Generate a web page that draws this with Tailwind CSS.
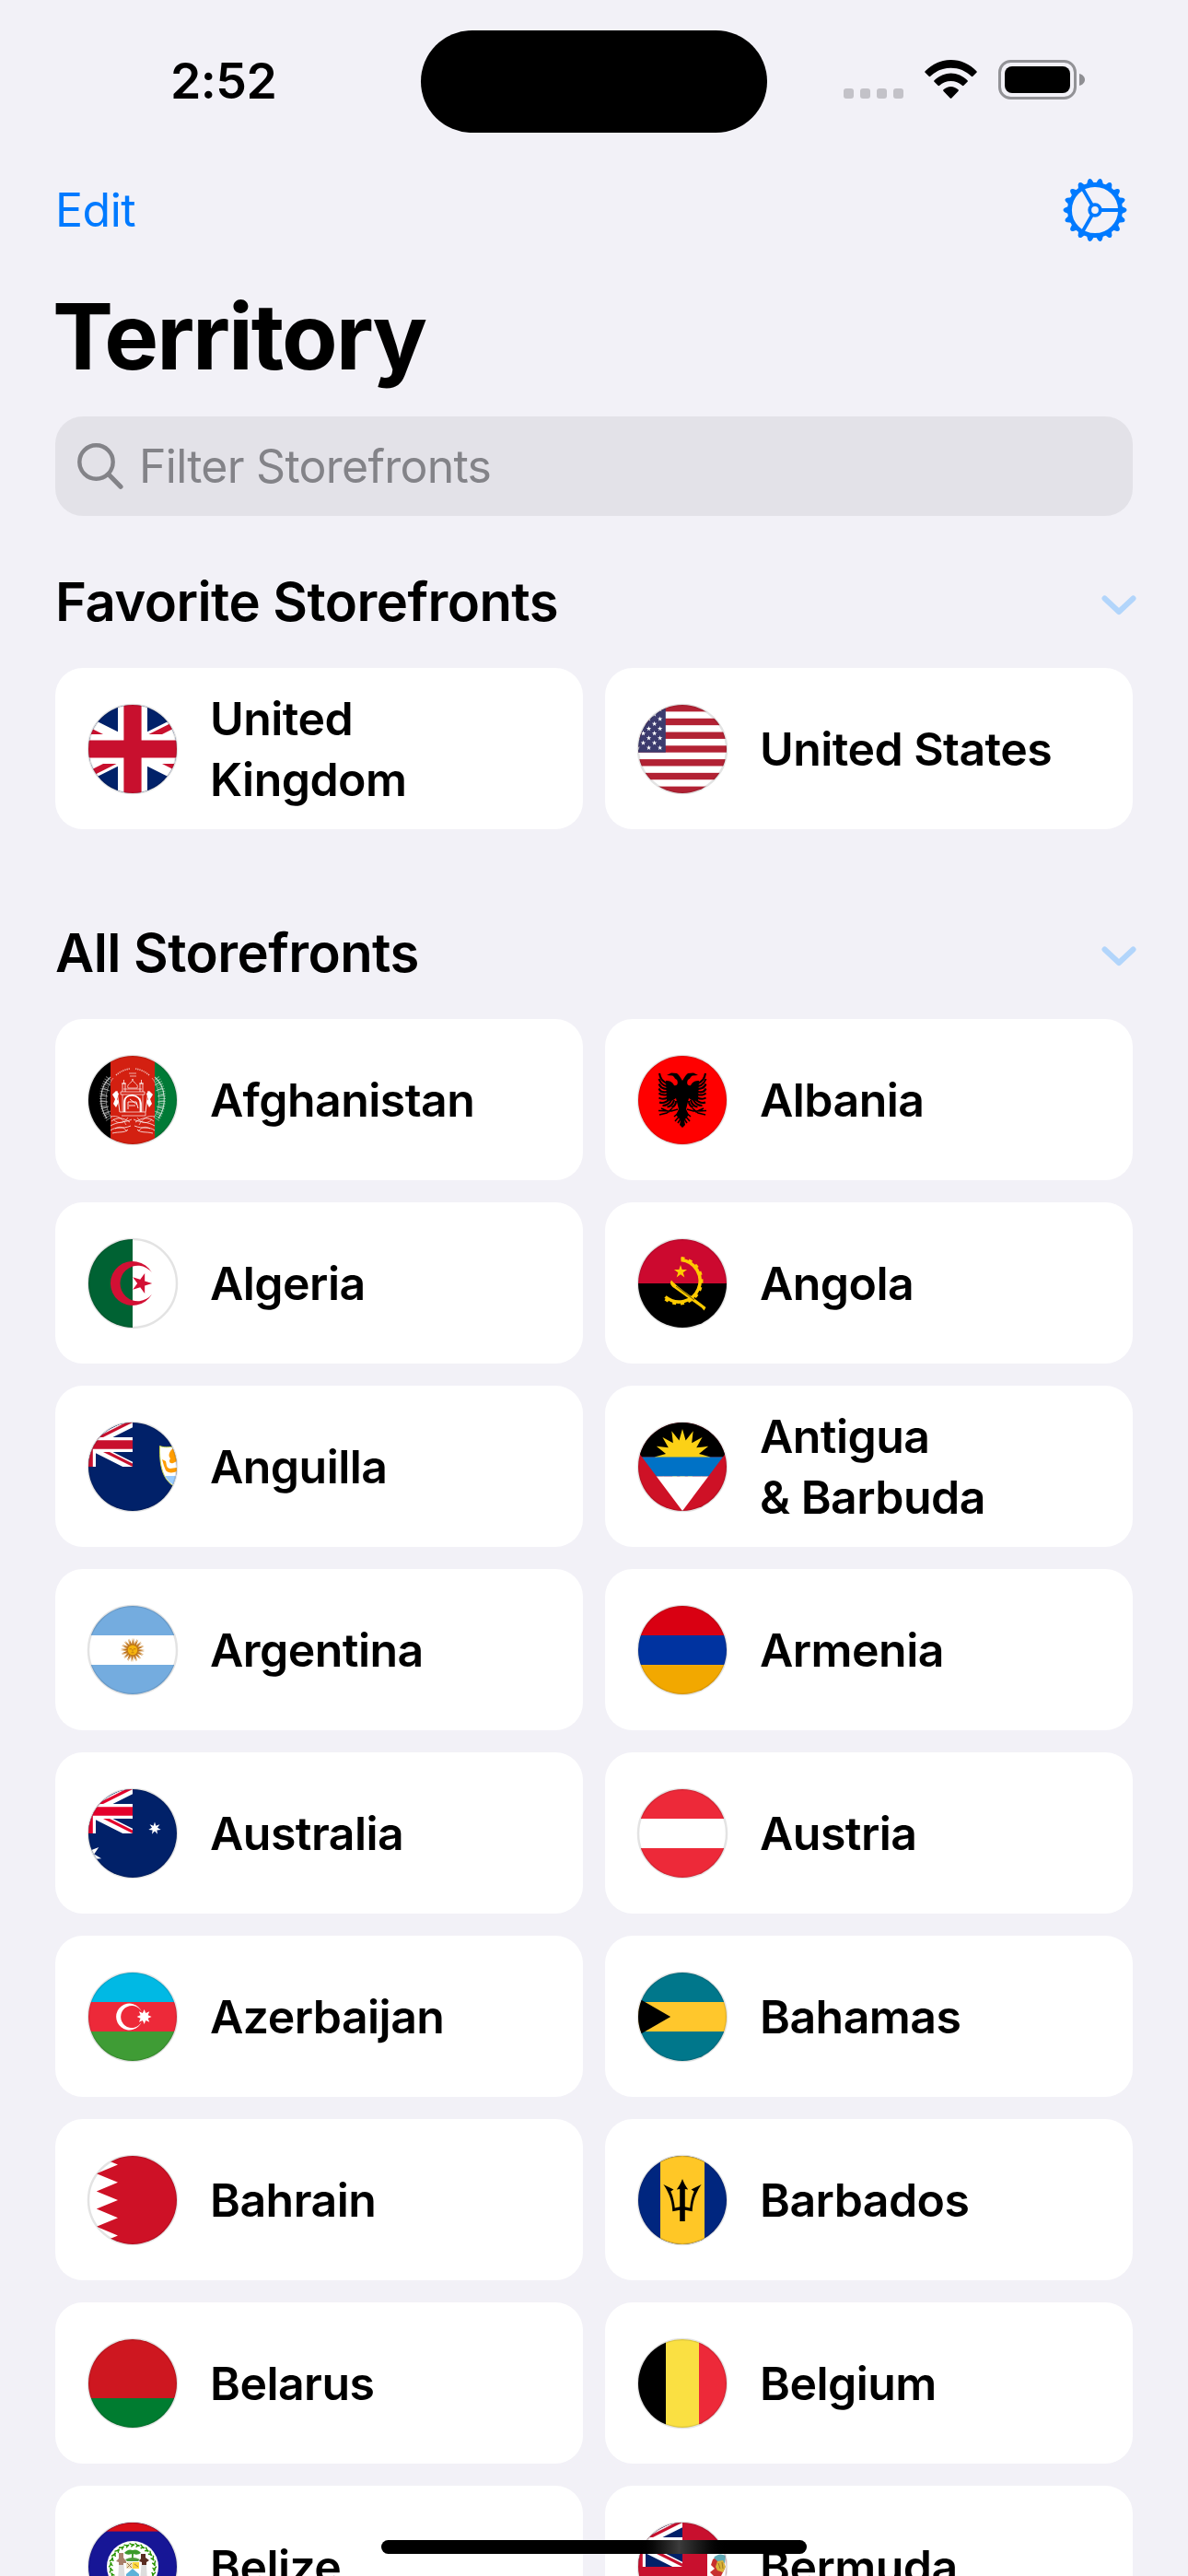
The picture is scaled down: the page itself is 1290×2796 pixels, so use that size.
<!DOCTYPE html>
<html lang="en">
<head>
<meta charset="utf-8">
<meta name="viewport" content="width=device-width, initial-scale=1">
<title>Territory</title>
<script src="https://cdn.jsdelivr.net/npm/@tailwindcss/browser@4"></script>
</head>
<body class="bg-[#f2f1f7] font-['Inter',sans-serif] text-black">
<main class="relative h-[2796px] w-[1290px] overflow-hidden">

  <!-- Status bar -->
  <div class="flex h-36 items-end">
    <div class="flex h-[111px] w-[457px] shrink-0 items-center pl-[185px] text-[53.500px] font-semibold tracking-[-0.01em]"><span>2:52</span></div>
    <div class="h-[111px] w-[376px] shrink-0 rounded-full bg-black"></div>
    <div class="flex h-[111px] w-[457px] shrink-0 items-start pt-8 pl-[83px]">
      <div class="mt-[31px] flex gap-[7px]">
        <i class="size-[11px] rounded-[3px] bg-[#c3c2c8]"></i><i class="size-[11px] rounded-[3px] bg-[#c3c2c8]"></i><i class="size-[11px] rounded-[3px] bg-[#c3c2c8]"></i><i class="size-[11px] rounded-[3px] bg-[#c3c2c8]"></i>
      </div>
      <svg class="ml-[23px] h-[42px] w-[57px]" viewBox="0 0 57 42">
        <path d="M.6 12.2C8 4.400 18 0 28.500 0S49 4.400 56.400 12.200Q57.200 13 56.400 13.800L52.400 17.800Q51.500 18.500 50.700 17.700C45 12 37 8.700 28.500 8.700S12 12 6.300 17.700Q5.500 18.500 4.600 17.800L.6 13.800Q-.2 13 .6 12.200Z"/>
        <path d="M10.500 22.200C15.500 17.400 21.800 14.500 28.500 14.500S41.500 17.400 46.500 22.200Q47.300 23 46.500 23.800L42.500 27.800Q41.600 28.500 40.800 27.800C37.500 24.800 33.200 23 28.500 23S19.500 24.800 16.200 27.800Q15.400 28.500 14.500 27.800L10.500 23.800Q9.700 23 10.500 22.200Z"/>
        <path d="M20.500 32.300C22.800 30.300 25.500 29 28.500 29S34.200 30.300 36.500 32.300Q37.400 33.100 36.500 34L29.300 41.400Q28.500 42 27.700 41.400L20.500 34Q19.600 33.100 20.500 32.300Z"/>
      </svg>
      <svg class="ml-[23px] h-[43px] w-[94px]" viewBox="0 0 94 43">
        <rect x="1.500" y="1.500" width="82" height="40" rx="12" fill="none" stroke="#929296" stroke-width="3"/>
        <rect x="7" y="7" width="71" height="29" rx="8"/>
        <path d="M88 15C92 16 94 19 94 21.500S92 27 88 28Z" fill="#8f8f93"/>
      </svg>
    </div>
  </div>

  <!-- Navigation -->
  <nav class="mt-9 flex h-24 items-center justify-between pr-[66px] pl-[60px] text-[50px] tracking-[-0.01em] text-[#007aff]">
    <a>Edit</a>
    <svg id="gear" class="size-[70px]" viewBox="-35 -35 70 70" fill="none" stroke="#007aff">
      <circle r="27.500" stroke-width="4.800"/>
      <circle r="5.800" stroke-width="3.800"/>
      <path d="M7 0H27M-3.500 6.060L-13.500 23.400M-3.500-6.060L-13.500-23.400" stroke-width="3.800"/>
    </svg>
  </nav>

  <div class="px-[60px]">
    <h1 class="mt-[29px] -ml-[3px] h-[120px] text-[99px] leading-[120px] font-bold tracking-[-0.021em]">Territory</h1>

    <div class="mt-[27px] flex h-[108px] items-center rounded-[30px] bg-[#e3e2e8] pl-6 text-[50px] tracking-[-0.015em] text-[#838388]">
      <svg class="mr-[17px] size-[50px]" viewBox="0 0 50 50" fill="none" stroke="#838388" stroke-width="4.400" stroke-linecap="round"><circle cx="20.500" cy="20.500" r="18.200"/><path d="M34 34L47 47.200" stroke-width="5.200"/></svg>
      <span>Filter Storefronts</span>
    </div>

    <section>
      <header class="mt-[57px] mb-9 flex h-[72px] items-center justify-between">
        <h2 class="text-[58px] font-semibold tracking-[-0.0095em]">Favorite Storefronts</h2>
        <svg class="mt-[7px] -mr-1 h-[22px] w-[38px]" viewBox="0 0 38 22" fill="none" stroke="#b2d5fb" stroke-width="6" stroke-linecap="round" stroke-linejoin="round"><path d="M3.500 3.500L19 18L34.500 3.500"/></svg>
      </header>
      <div id="favorites" class="grid grid-cols-2 gap-6"></div>
    </section>

    <section>
      <header class="mt-[98px] mb-9 flex h-[72px] items-center justify-between">
        <h2 class="text-[58px] font-semibold tracking-[-0.0095em]">All Storefronts</h2>
        <svg class="mt-[7px] -mr-1 h-[22px] w-[38px]" viewBox="0 0 38 22" fill="none" stroke="#b2d5fb" stroke-width="6" stroke-linecap="round" stroke-linejoin="round"><path d="M3.500 3.500L19 18L34.500 3.500"/></svg>
      </header>
      <div id="all" class="grid grid-cols-2 gap-6"></div>
    </section>
  </div>

  <!-- Home indicator -->
  <div class="absolute top-[2757px] left-[414px] h-[15px] w-[462px] rounded-full bg-linear-to-r from-black from-60% via-[#3c3c3c] via-70% to-black to-82%"></div>
</main>

<!-- Shared flag parts -->
<svg class="absolute size-0">
  <defs>
    <clipPath id="disc"><circle cx="48" cy="48" r="48"/></clipPath>
    <clipPath id="saltire"><path d="M30 15h30v15zv15h-30zh-30v-15zv-15h30z"/></clipPath>
    <clipPath id="jackBox"><path d="M0 0h60v30h-60z"/></clipPath>
  </defs>
</svg>

<script>
const R = (x, y, w, h, c) => `<rect x="${x}" y="${y}" width="${w}" height="${h}" fill="${c}"/>`;
const P = (d, c, extra = '') => `<path d="${d}" fill="${c}" ${extra}/>`;
const L = (d, c, w, extra = '') => `<path d="${d}" fill="none" stroke="${c}" stroke-width="${w}" ${extra}/>`;
const star = (cx, cy, r, n, inner, c, rot = -90) => {
  let pts = [];
  for (let i = 0; i < n * 2; i++) {
    const a = (rot + i * 180 / n) * Math.PI / 180, q = i % 2 ? r * inner : r;
    pts.push((cx + q * Math.cos(a)).toFixed(2) + ',' + (cy + q * Math.sin(a)).toFixed(2));
  }
  return `<polygon points="${pts.join(' ')}" fill="${c}"/>`;
};
const bands = (a, b, c) => R(0, 0, 96, 32, a) + R(0, 32, 96, 32, b) + R(0, 64, 96, 32, c);
const jack = (transform, red) => `<g transform="${transform}"><g clip-path="url(#jackBox)">${R(0, 0, 60, 30, '#012169')}
  ${L('M0 0L60 30M60 0L0 30', '#fff', 6)}${L('M0 0L60 30M60 0L0 30', red, 4, 'clip-path="url(#saltire)"')}
  ${L('M30 0V30M0 15H60', '#fff', 10)}${L('M30 0V30M0 15H60', red, 6)}</g></g>`;
const mirror = s => s + `<g transform="matrix(-1 0 0 1 96 0)">${s}</g>`;

const flags = {
  gb: () => jack('translate(-48 0) scale(3.2)', '#C8102E'),
  us: () => {
    let s = R(0, 0, 96, 96, '#fff');
    for (let i = 0; i < 13; i += 2) s += R(0, i * 96 / 13, 96, 96 / 13, '#B22234');
    s += R(0, 0, 29.8, 51.7, '#3C3B6E');
    for (let i = 6; i < 12; i++) for (let j = 1; j < 10; j++) if ((i + j) % 2 == 0) s += star(-43.2 + 6.08 * i, 5.17 * j, 2.9, 5, .382, '#fff');
    return s;
  },
  af: () => {
    let s = R(0, 0, 24, 96, '#000') + R(24, 0, 48, 96, '#D32011') + R(72, 0, 24, 96, '#007A36');
    let half = L('M24 23C11 34 11 55 20 68', '#fff', 1.1, 'opacity=".7"') + L('M27 24C17 36 17 56 25 67', '#fff', .8, 'opacity=".6"')
      + L('M22 24C13 36 13 55 22 69', '#fff', 6.5, 'stroke-dasharray="1 1.6" opacity=".45"')
      + L('M19 29L24 32M16 35L23 38M14 42L21 44M14 49L21 50M15 56L22 55M18 63L24 60', '#fff', .8, 'opacity=".7"')
      + L('M25 71C31 66 38 67 45 72M24 76C32 71 39 73 47 69M24 81C30 76 37 80 46 76M26 84C34 82 39 84 43 80', '#fff', .9, 'opacity=".85"')
      + L('M27 69C33 75 39 73 43 67M29 79C34 76 38 77 42 82M24 66C32 64 37 68 41 75', '#fff', .7, 'opacity=".85"')
      + P('M26 42L30 38L33 41L31 47L33 50L30 56L27 52L29 47Z', '#fff') + L('M31 38L34 61', '#fff', .9)
      + L('M37 39V30H40V39M36 30H41M38.5 30V26', '#fff', .9, 'opacity=".85"') + L('M30 21Q37 15 45 14', '#fff', 1.6, 'stroke-dasharray="1.2 1" opacity=".7"');
    s += mirror(half);
    s += L('M43 35C41 30 48 30 48 25C48 30 55 30 53 35ZM38 36H58M35 39H61V42H35ZM37 42V61M59 42V61M34 61H62V65H36M40 61V46M56 61V46', '#fff', .8, 'opacity=".85"')
      + L('M39 61V50C39 40 57 40 57 53V61', '#fff', 1.700) + L('M43 58V50H52L54 57M44 54H51M45 47L53 53', '#fff', .9) + L('M44 19H52M45 22H52', '#fff', .8, 'opacity=".8"');
    return s;
  },
  al: () => R(0, 0, 96, 96, '#FF0000') + mirror(
      P('M48 27C46 24 45 21 42 19L36 18.500L31 21L37 21.500C40 23 39 25 42 26C44 30 42 33 39 32C37 28 34 27 30 27L31 48C36 49 37 49 41 46L44 58L41 64L46 70L45 75L48 78Z', '#000')
      + L('M31 30C26 27 24 25 23 19M31 33C26 32 24 29 22.500 25M31 36C27 36 24 34 22.500 30.500M31 39C27 40 24 39 22.500 35.500M32 42C28 43 25 43 22.500 40.500M33 45C29 47 26 48 22.500 45.500M34 47C31 50 27 52 23 50.500M36 48C34 52 30 54 26.500 54M39 48C38 52 35 55 31.500 55.500M41 49C41 53 39 55 36.500 56', '#000', 2.100)
      + L('M43 58L36 60L22 59.500M37 57L31 62L23 64M34 61L25 57M45 61L39 66M46 64L40 71M47 67L43 73', '#000', 1.600)),
  dz: () => R(0, 0, 48, 96, '#006233') + R(48, 0, 48, 96, '#fff') + P('M68.900 36.300A24 24 0 1 0 68.900 59.700A19.200 19.200 0 1 1 68.900 36.300Z', '#D21034') + star(57.600, 48, 11.600, 5, .382, '#D21034', 0),
  ao: () => {
    let s = R(0, 0, 96, 48, '#CC092F') + R(0, 48, 96, 48, '#000');
    s += L('M46.500 22.500A22.800 22.800 0 1 1 29.500 62.500', '#FFCB00', 3.600);
    s += L('M46.500 20.500A24.800 24.800 0 1 1 28 64', '#FFCB00', 3, 'stroke-dasharray="4 4.7"');
    s += star(46, 35.400, 7.400, 5, .382, '#FFCB00');
    return s + P('M36 44.500C33.500 48 36 51 39 53L69 74.500L71.500 77.500L73.500 74L59 63C50 57 41 50 36 44.500Z', '#FFCB00') + L('M41 51L61 66', '#000', .6);
  },
  ai: () => R(0, 0, 96, 96, '#012169') + jack('translate(-48 0) scale(1.6)', '#C8102E')
      + P('M77.500 25.500C84 28 90 26 96 26H115V45C113 60 106 66 96 71C82 64 77 51 77.500 25.500Z', '#fff', 'stroke="#C8D44A" stroke-width="1"')
      + P('M83 58H110C106 63 102 67 96 70C90 67 86 63 83 58Z', '#9CF')
      + P('M92 28C88 31 86 36 89 39C87 42 88 45 92 44L96 42V31ZM80 40L84 42L85 47C87 52 91 49 96 49V53C92 55 86 55 84 52L82 47Z', '#FF9D00'),
  ag: () => `${R(0, 0, 96, 96, '#CE1126')}<clipPath id="vee"><path d="M-24 0H120L48 96Z"/></clipPath><g clip-path="url(#vee)">${R(0, 0, 96, 37.500, '#000')}${star(48, 37.500, 30.500, 16, .6, '#FCD116')}${R(0, 37.500, 96, 21, '#0072C6')}${R(0, 58.500, 96, 38, '#fff')}</g>`,
  ar: () => bands('#74ACDF', '#fff', '#74ACDF') + star(48, 48, 13.300, 16, .5, '#D9A35A') + star(48, 48, 13, 16, .4, '#B86E1F', -84)
      + `<circle cx="48" cy="48" r="5.800" fill="#F6B40E" stroke="#C07A15" stroke-width="1.200"/>` + L('M44.500 46.800H47M49 46.800H51.500M46.500 50.800H49.500M48 47V49.500', '#A85F10', .7),
  am: () => bands('#D90012', '#0033A0', '#F2A800'),
  au: () => R(0, 0, 96, 96, '#012169') + jack('translate(-48 0) scale(1.6)', '#E4002B') + star(0, 72, 14.400, 7, .444, '#fff') + star(72, 42.500, 6.900, 7, .444, '#fff'),
  at: () => bands('#ED2939', '#fff', '#ED2939'),
  az: () => bands('#00B9E4', '#ED2939', '#3F9C35') + P('M58 42.900A14.400 14.400 0 1 0 58 53.100A12 12 0 1 1 58 42.900Z', '#fff') + star(60.600, 48, 8, 8, .55, '#fff'),
  bs: () => bands('#00778B', '#FFC72C', '#00778B') + P('M-48 0L35.100 48L-48 96Z', '#000'),
  bh: () => R(0, 0, 96, 96, '#fff') + P('M96 0H8.800L32 9.600L8.800 19.200L32 28.800L8.800 38.400L32 48L8.800 57.600L32 67.200L8.800 76.800L32 86.400L8.800 96H96Z', '#CE1126'),
  bb: () => R(0, 0, 96, 96, '#00267F') + R(24, 0, 48, 96, '#FFC726')
      + mirror(P('M27.300 31L38.500 36.500L35.300 38.500C38 44 39 50 39.800 56.500L45.200 55.300V36L41.800 36.500C44.500 33 46.500 29 48 25V71H45.200V58.800L37.300 60.300C37 51 34.500 43.500 31.500 38C30.500 35.500 29 33.300 27.300 31Z', '#000')),
  by: () => R(0, 0, 96, 64, '#CE1720') + R(0, 64, 96, 32, '#007C30'),
  be: () => R(0, 0, 30, 96, '#000') + R(30, 0, 36, 96, '#FAE042') + R(66, 0, 30, 96, '#ED2939'),
  bz: () => {
    let s = R(0, 0, 96, 96, '#171696') + R(0, 0, 96, 9.600, '#D90F19') + R(0, 86.400, 96, 9.600, '#D90F19') + '<circle cx="48" cy="48" r="28" fill="#fff"/>';
    for (let i = 0; i < 26; i++) s += `<g transform="rotate(${i * 13.850} 48 48)">${L('M44.500 22.500Q47 24.500 50 24M46.500 26.500Q47 24.500 49.500 24.200', '#289400', 1.500)}</g>`;
    return s + P('M39 33Q43 28 48 30Q53 28 57 33Q53 36 49 34L48.500 41H47L47 34Q42 36 39 33Z', '#3b9a2c') + P('M40 40Q48 36 56 40L54 42H42Z', '#4d9a3a')
      + P('M41 43H48V50H41Z', '#eee3c0') + P('M48 43H55V50H48Z', '#FFD83C') + P('M41 56L48 50L55 56V62H41Z', '#5EB2D8') + L('M42 44L47 49M47 44L42 49M50 45L54 48', '#9b6b3a', .9)
      + P('M33 33H38V38L41 42V44H38V46H33V43L30 42L33 39Z', '#A8806A') + P('M57 34H62V38L66 41L63 43V46H58V43L55 42L57 39Z', '#5A2D22') + P('M33 46H38.500L40 64H32ZM57.500 46H63L64 64H56Z', '#ddd');
  },
  bm: () => R(0, 0, 96, 96, '#C8102E') + jack('translate(-48 0) scale(1.6)', '#C8102E') + R(75, 31, 30, 34, '#fff')
      + P('M81 40L86 37L87 42L93 41L94 50L90 58H82L78 54L83 50L79 46Z', '#C8302E') + P('M82 38Q88 32 95 36L94 44L86 42Z', '#5FA9B5') + P('M86 42L92 41L95 48L92 54L86 52L84 48Z', '#D9B23A') + L('M87 44L89 50M91 43L92 50', '#8d6a1c', .8)
};

const card = ([code, name]) => `
  <a class="flex h-[175px] items-center gap-9 rounded-[30px] bg-white px-9">
    <svg class="size-24 shrink-0 overflow-visible" viewBox="0 0 96 96">
      <g clip-path="url(#disc)">${flags[code]()}</g>
      <circle cx="48" cy="48" r="48" fill="none" stroke="#000" stroke-opacity=".11" stroke-width="2.500"/>
    </svg>
    <span class="text-[50px] leading-[66px] font-semibold tracking-[-0.011em]">${name}</span>
  </a>`;

document.getElementById('favorites').innerHTML = [['gb', 'United<br>Kingdom'], ['us', 'United States']].map(card).join('');
document.getElementById('all').innerHTML = [
  ['af', 'Afghanistan'], ['al', 'Albania'], ['dz', 'Algeria'], ['ao', 'Angola'], ['ai', 'Anguilla'], ['ag', 'Antigua<br>&amp; Barbuda'],
  ['ar', 'Argentina'], ['am', 'Armenia'], ['au', 'Australia'], ['at', 'Austria'], ['az', 'Azerbaijan'], ['bs', 'Bahamas'],
  ['bh', 'Bahrain'], ['bb', 'Barbados'], ['by', 'Belarus'], ['be', 'Belgium'], ['bz', 'Belize'], ['bm', 'Bermuda']
].map(card).join('');

// 18 gear teeth around the rim
const gear = document.getElementById('gear');
let teeth = '';
for (let i = 0; i < 18; i++) teeth += `<path transform="rotate(${i * 20})" d="M28.500-4.200L33-2.200Q36 0 33 2.200L28.500 4.200Z" fill="#007aff" stroke="none"/>`;
gear.insertAdjacentHTML('beforeend', teeth);
</script>
</body>
</html>
